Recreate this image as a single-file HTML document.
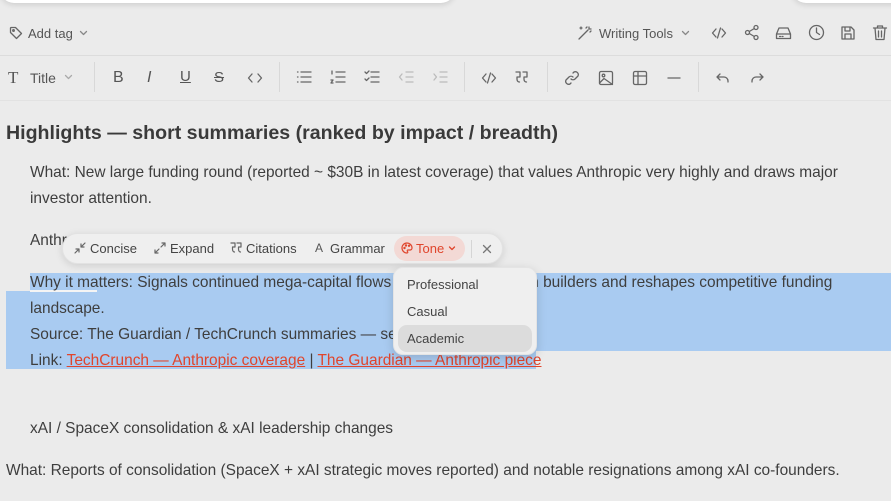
<!DOCTYPE html>
<html><head><meta charset="utf-8">
<style>
*{margin:0;padding:0;box-sizing:border-box}
body{width:891px;height:501px;overflow:hidden;background:#ebebeb;font-family:"Liberation Sans",sans-serif;color:#3a3a3a;position:relative}
.abs{position:absolute;white-space:nowrap}
.ic{position:absolute;stroke:#666;fill:none;stroke-width:1.3;stroke-linecap:round;stroke-linejoin:round}
.t{font-size:15.45px;color:#3e3e3e}
.sel{position:absolute;background:#a9cbf1}
a{color:#e0452c;text-decoration:underline}
.sep{position:absolute;width:1px;height:30px;background:#d8d8d8;top:62px}
</style></head><body>
<div class="abs" style="left:0;top:-12px;width:455px;height:15px;background:#fff;border-radius:0 0 14px 14px;box-shadow:0 2px 6px rgba(0,0,0,.12)"></div>
<div class="abs" style="left:792px;top:-12px;width:110px;height:15px;background:#fff;border-radius:0 0 0 14px;box-shadow:0 2px 6px rgba(0,0,0,.12)"></div>

<svg class="ic" style="left:9px;top:26px" width="14" height="14" viewBox="0 0 14 14"><path d="M1.5 2v4.5l6 6 5-5-6-6H2z"/><circle cx="4.5" cy="4.5" r="0.8"/></svg>
<div class="abs" style="left:28px;top:26px;font-size:13px;color:#555">Add tag</div>
<svg class="ic" style="left:79px;top:29px;stroke:#888" width="9" height="8" viewBox="0 0 9 8"><path d="M1.5 2.5l3 3 3-3"/></svg>

<svg class="ic" style="left:577px;top:25px" width="16" height="16" viewBox="0 0 16 16"><path d="M2 14L11 5M9 3l1-1M13 7l1-1M12 2v2M14 4h-2M4 2v2M3 3h2"/></svg>
<div class="abs" style="left:599px;top:26px;font-size:13px;color:#555">Writing Tools</div>
<svg class="ic" style="left:681px;top:29px;stroke:#888" width="9" height="8" viewBox="0 0 9 8"><path d="M1.5 2.5l3 3 3-3"/></svg>
<svg class="ic" style="left:711px;top:25px" width="16" height="16" viewBox="0 0 16 16"><path d="M5 4L1.5 8 5 12M11 4l3.5 4L11 12M9.5 3l-3 10"/></svg>
<svg class="ic" style="left:744px;top:24px" width="16" height="17" viewBox="0 0 16 17"><circle cx="12" cy="3.5" r="2"/><circle cx="3.5" cy="8.5" r="2"/><circle cx="12" cy="13.5" r="2"/><path d="M5.3 7.5l5-3M5.3 9.5l5 3"/></svg>
<svg class="ic" style="left:775px;top:25px" width="17" height="16" viewBox="0 0 17 16"><path d="M1.5 9l2.5-6h9l2.5 6v4.5h-14zM1.5 9h14M4.5 11.5h1M7 11.5h1"/></svg>
<svg class="ic" style="left:808px;top:24px" width="17" height="17" viewBox="0 0 17 17"><circle cx="8.5" cy="8.5" r="7"/><path d="M8.5 4v4.5l3 2"/></svg>
<svg class="ic" style="left:840px;top:25px" width="16" height="16" viewBox="0 0 16 16"><path d="M2 2h9l3 3v9H2zM5 2v4h5V2M5 14v-5h6v5"/></svg>
<svg class="ic" style="left:872px;top:24px" width="16" height="17" viewBox="0 0 16 17"><path d="M1.5 4h13M5.5 4V2h5v2M3 4l1 11.5h8L13 4M6.5 7v6M9.5 7v6"/></svg>

<div class="abs" style="left:0;top:55px;width:891px;height:1px;background:#dcdcdc"></div>

<div class="abs" style="left:8px;top:68px;font-size:17px;color:#555;font-family:'Liberation Serif',serif">T</div>
<div class="abs" style="left:30px;top:70px;font-size:14px;color:#555">Title</div>
<svg class="ic" style="left:64px;top:73px;stroke:#aaa" width="9" height="8" viewBox="0 0 9 8"><path d="M1.5 2.5l3 3 3-3"/></svg>
<div class="sep" style="left:94px"></div>
<div class="abs" style="left:113px;top:69px;font-size:16px;color:#555">B</div>
<div class="abs" style="left:147px;top:69px;font-size:16px;color:#555;font-style:italic">I</div>
<div class="abs" style="left:180px;top:68px;font-size:15px;color:#555;text-decoration:underline">U</div>
<div class="abs" style="left:214px;top:69px;font-size:15px;color:#555;text-decoration:line-through">S</div>
<svg class="ic" style="left:247px;top:71px" width="16" height="14" viewBox="0 0 16 14"><path d="M5 3L1.5 7 5 11M11 3l3.5 4L11 11"/></svg>
<div class="sep" style="left:279px"></div>
<svg class="ic" style="left:296px;top:70px" width="16" height="14" viewBox="0 0 16 14"><path d="M5 2h10M5 7h10M5 12h10M1.5 2h.5M1.5 7h.5M1.5 12h.5"/></svg>
<svg class="ic" style="left:330px;top:70px" width="16" height="14" viewBox="0 0 16 14"><path d="M6 2h9M6 7h9M6 12h9M2 1v3M1 10h2l-2 3h2"/></svg>
<svg class="ic" style="left:364px;top:70px" width="16" height="14" viewBox="0 0 16 14"><path d="M7 2h8M7 7h8M7 12h8M1 2l1.5 1.5L5 1M1 9l1.5 1.5L5 8"/></svg>
<svg class="ic" style="left:398px;top:70px;stroke:#bbb" width="16" height="14" viewBox="0 0 16 14"><path d="M8 2h7M8 7h7M8 12h7M4 4L1.5 7 4 10"/></svg>
<svg class="ic" style="left:432px;top:70px;stroke:#bbb" width="16" height="14" viewBox="0 0 16 14"><path d="M8 2h7M8 7h7M8 12h7M2 4l2.5 3L2 10"/></svg>
<div class="sep" style="left:464px"></div>
<svg class="ic" style="left:481px;top:71px" width="16" height="14" viewBox="0 0 16 14"><path d="M5 3L1.5 7 5 11M11 3l3.5 4L11 11M9.5 2l-3 10"/></svg>
<svg class="ic" style="left:514px;top:70px" width="16" height="15" viewBox="0 0 16 15"><path d="M2 2h4v5H3v2c0 2 1 3 2.5 3M9 2h4v5h-3v2c0 2 1 3 2.5 3"/></svg>
<div class="sep" style="left:547px"></div>
<svg class="ic" style="left:564px;top:70px" width="16" height="16" viewBox="0 0 16 16"><path d="M7 9a3 3 0 004 0l3-3a3 3 0 00-4-4l-1 1M9 7a3 3 0 00-4 0l-3 3a3 3 0 004 4l1-1"/></svg>
<svg class="ic" style="left:598px;top:70px" width="16" height="16" viewBox="0 0 16 16"><rect x="1.5" y="1.5" width="13" height="13" rx="1.5"/><circle cx="5.5" cy="5.5" r="1.3"/><path d="M1.5 13l4.5-4.5 8.5 6"/></svg>
<svg class="ic" style="left:632px;top:70px" width="16" height="16" viewBox="0 0 16 16"><rect x="1.5" y="1.5" width="13" height="13" rx="1.5"/><path d="M1.5 6h13M6 1.5v13"/></svg>
<svg class="ic" style="left:666px;top:70px" width="16" height="16" viewBox="0 0 16 16"><path d="M2 8h12"/></svg>
<div class="sep" style="left:698px"></div>
<svg class="ic" style="left:715px;top:71px" width="16" height="14" viewBox="0 0 16 14"><path d="M5 3L2 6l3 3M2 6h7a4 4 0 014 4v1"/></svg>
<svg class="ic" style="left:749px;top:71px" width="16" height="14" viewBox="0 0 16 14"><path d="M11 3l3 3-3 3M14 6H7a4 4 0 00-4 4v1"/></svg>

<div class="abs" style="left:0;top:100px;width:891px;height:1px;background:#e2e2e2"></div>

<div class="abs" style="left:6px;top:122px;font-size:19.6px;font-weight:bold;color:#3a3a3a">Highlights — short summaries (ranked by impact / breadth)</div>
<div class="abs t" style="left:30px;top:164px">What: New large funding round (reported ~ $30B in latest coverage) that values Anthropic very highly and draws major</div>
<div class="abs t" style="left:30px;top:190px">investor attention.</div>
<div class="abs t" style="left:30px;top:232px">Anthropic</div>

<div class="sel" style="left:30px;top:273px;width:861px;height:20px"></div>
<div class="sel" style="left:6px;top:291px;width:885px;height:60px"></div>
<div class="sel" style="left:6px;top:350px;width:530px;height:19px"></div>
<div class="abs" style="left:30px;top:290px;width:67px;height:2px;background:#f4f4f4"></div>
<div class="abs t" style="left:30px;top:274px">Why it matters: Signals continued mega-capital flows to frontier AI platform builders and reshapes competitive funding</div>
<div class="abs t" style="left:30px;top:300px">landscape.</div>
<div class="abs t" style="left:30px;top:326px">Source: The Guardian / TechCrunch summaries — see links below.</div>
<div class="abs t" style="left:30px;top:352px">Link: <a>TechCrunch — Anthropic coverage</a> | <a>The Guardian — Anthropic piece</a></div>

<div class="abs t" style="left:30px;top:420px">xAI / SpaceX consolidation &amp; xAI leadership changes</div>
<div class="abs t" style="left:6px;top:462px">What: Reports of consolidation (SpaceX + xAI strategic moves reported) and notable resignations among xAI co-founders.</div>

<div class="abs" style="left:62px;top:233px;width:441px;height:31px;background:#efefef;border-radius:16px;box-shadow:0 2px 8px rgba(0,0,0,.12);border:1px solid #e2e2e2"></div>
<svg class="ic" style="left:74px;top:242px;stroke-width:1.2" width="12" height="12" viewBox="0 0 12 12"><path d="M1 11l4-4M5 7H2M5 7v3M11 1L7 5M7 5h3M7 5V2"/></svg>
<div class="abs" style="left:90px;top:241px;font-size:13px;color:#444">Concise</div>
<svg class="ic" style="left:154px;top:242px;stroke-width:1.2" width="12" height="12" viewBox="0 0 12 12"><path d="M1 11l4-4M1 11h3M1 11V8M11 1L7 5M11 1H8M11 1v3"/></svg>
<div class="abs" style="left:170px;top:241px;font-size:13px;color:#444">Expand</div>
<svg class="ic" style="left:230px;top:242px;stroke-width:1.2" width="12" height="12" viewBox="0 0 12 12"><path d="M1 1h4v4H2.5v2c0 2 1 3 2 3M7 1h4v4H8.5v2c0 2 1 3 2 3"/></svg>
<div class="abs" style="left:246px;top:241px;font-size:13px;color:#444">Citations</div>
<div class="abs" style="left:315px;top:241px;font-size:12px;color:#555">A</div>
<div class="abs" style="left:330px;top:241px;font-size:13px;color:#444">Grammar</div>
<div class="abs" style="left:394px;top:236px;width:71px;height:25px;background:#f3d9d5;border-radius:13px"></div>
<svg class="ic" style="left:401px;top:242px;stroke:#e0452c;stroke-width:1.2" width="12" height="12" viewBox="0 0 12 12"><path d="M6 1a5 5 0 100 10c1 0 1-1 .5-1.5S6 8 7 8h2a2 2 0 002-2c0-3-2.5-5-5-5z"/><circle cx="3.5" cy="6" r=".6"/><circle cx="5" cy="3.5" r=".6"/><circle cx="8" cy="3.8" r=".6"/></svg>
<div class="abs" style="left:416px;top:241px;font-size:13px;color:#e0452c">Tone</div>
<svg class="ic" style="left:448px;top:245px;stroke:#e0452c" width="8" height="7" viewBox="0 0 8 7"><path d="M1.5 2l2.5 2.5L6.5 2"/></svg>
<div class="abs" style="left:471px;top:240px;width:1px;height:18px;background:#d5d5d5"></div>
<svg class="ic" style="left:482px;top:244px;stroke:#777" width="10" height="10" viewBox="0 0 10 10"><path d="M1.5 1.5l7 7M8.5 1.5l-7 7"/></svg>

<div class="abs" style="left:393px;top:267px;width:144px;height:88px;background:#efefef;border-radius:10px;box-shadow:0 3px 10px rgba(0,0,0,.15);border:1px solid #e4e4e4"></div>
<div class="abs" style="left:398px;top:325px;width:134px;height:27px;background:#dcdcdc;border-radius:9px"></div>
<div class="abs" style="left:407px;top:277px;font-size:13px;color:#444">Professional</div>
<div class="abs" style="left:407px;top:304px;font-size:13px;color:#444">Casual</div>
<div class="abs" style="left:407px;top:331px;font-size:13px;color:#444">Academic</div>
</body></html>
